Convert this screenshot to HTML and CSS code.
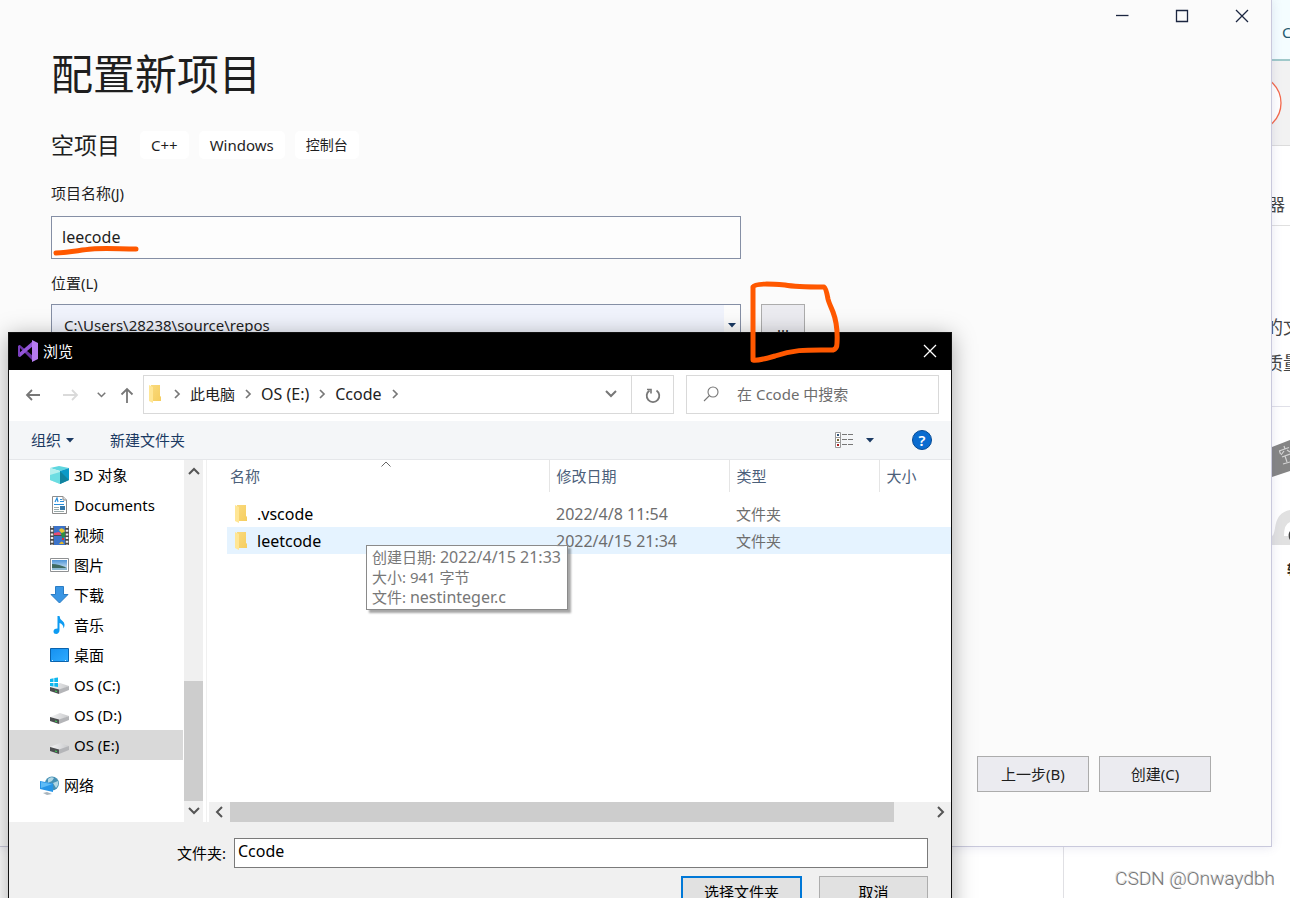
FILE: index.html
```html
<!DOCTYPE html>
<html lang="zh-CN">
<head>
<meta charset="utf-8">
<title>配置新项目</title>
<link rel="stylesheet" href="styles.css">
</head>
<body>
<svg class="defs" aria-hidden="true">
  <defs>
    <linearGradient id="g-folder" x1="0" x2="1" y2="1"><stop offset="0" stop-color="#ffe9a2"/><stop offset="1" stop-color="#f5cb58"/></linearGradient>
    <linearGradient id="g-drive" x1="0" x2="1"><stop offset="0" stop-color="#f4f4f5"/><stop offset="1" stop-color="#c9cacc"/></linearGradient>
    <linearGradient id="g-sky" x1="0" x2="0" y2="1"><stop offset="0" stop-color="#4d94d6"/><stop offset="1" stop-color="#e4f1f8"/></linearGradient>
    <linearGradient id="g-desk" x1="0" x2="1" y2="1"><stop offset="0" stop-color="#1590f0"/><stop offset="1" stop-color="#2fabff"/></linearGradient>
    <symbol id="folder" viewBox="0 0 13 18"><path d="M2 0h9v11l1 1v4H2z" fill="#f6cf63"/><path d="M2 0h9v11l1 1v4H2z" fill="url(#g-folder)" opacity=".4"/><path d="M0 0l4 2v16l-4-2z" fill="#ffe695"/></symbol>
    <symbol id="drive" viewBox="0 0 19 18"><path d="M0 11l10-4 9 3-9 4z" fill="url(#g-drive)"/><path d="M0 11l9 2.500V18L0 15z" fill="#4c4e50"/><path d="M9 13.500l10-3.500v4L9 18z" fill="#b4b5b8"/><path d="M5 14.500l2 .5v1l-2-.5z" fill="#3ddc55"/></symbol>
    <symbol id="crumb" viewBox="0 0 8 10"><path d="M2 1l4 4-4 4" fill="none" stroke="#777" stroke-width="1.700"/></symbol>
    <symbol id="caret" viewBox="0 0 8 5"><path d="M0 0h8L4 4.500z" fill="#1b3a63"/></symbol>
    <symbol id="chev-down" viewBox="0 0 12 8"><path d="M1 1l5 5 5-5" fill="none" stroke="currentColor" stroke-width="2"/></symbol>
  </defs>
</svg>

<div class="desktop">
  <aside class="browser">
    <div class="browser-tab">C</div>
    <div class="browser-tools"><svg width="30" height="62" viewBox="0 0 30 62"><circle cx="-7" cy="31" r="28" fill="#fff" stroke="#f4694c" stroke-width="1.300"/></svg></div>
    <div class="browser-menu">器</div>
    <div class="browser-text"><p>的文</p><p>质量</p></div>
    <div class="browser-user">
      <svg width="30" height="44" viewBox="0 0 30 44"><path d="M12 10L30 3v31l-18 6z" fill="#858585"/><g fill="none" stroke="#d4d4d4" stroke-width="1.200"><path d="M24 9l1 3M19 14l10-3.500M19.500 14l1 3M24 14l-3 4M27 13l3 2M22 20l8-3M25 19l2 6M23 27l7-2"/></g></svg>
      <svg width="30" height="40" viewBox="0 0 30 40"><path d="M12 38V29q2-1 3-8 2-16 15-18v12q-6 2-6 14h6v9z" fill="#e1e1e1"/><path d="M30 24q-3 4 0 9z" fill="#444"/></svg>
      <span>转</span>
    </div>
  </aside>
  <div class="browser-foot"></div>

  <main class="project">
    <header class="project-bar">
      <button aria-label="最小化"><svg width="14" height="14" viewBox="0 0 14 14"><path d="M1 6.500h12.500"/></svg></button>
      <button aria-label="最大化"><svg width="14" height="14" viewBox="0 0 14 14"><path d="M1.500 1.500h11v11h-11z"/></svg></button>
      <button aria-label="关闭"><svg width="14" height="14" viewBox="0 0 14 14"><path d="M1 1l12 12M13 1L1 13"/></svg></button>
    </header>
    <form class="project-form">
      <h1>配置新项目</h1>
      <div class="kind"><h2>空项目</h2><span class="tag tag-latin">C++</span><span class="tag tag-latin">Windows</span><span class="tag">控制台</span></div>
      <label class="lbl" for="pname">项目名称(J)</label>
      <input class="field" id="pname" value="leecode">
      <label class="lbl" for="ploc">位置(L)</label>
      <div class="loc">
        <div class="combo">
          <select id="ploc"><option>C:\Users\28238\source\repos</option></select>
          <span class="combo-arrow"><svg width="8" height="5"><use href="#caret"/></svg></span>
        </div>
        <button class="btn browse" type="button">...</button>
      </div>
      <footer class="project-actions"><button class="btn" type="button">上一步(B)</button><button class="btn" type="button">创建(C)</button></footer>
    </form>
  </main>

  <section class="dialog" aria-label="浏览">
    <header class="dialog-bar">
      <svg width="22" height="22" viewBox="0 0 22 22"><path d="M1 6l2-1 13 11v5L3 8v7l-2 1z" fill="#6a35a5"/><path d="M1 16l2 1L16 6V1L1 14z" fill="#9456d8"/><path d="M1 6l2-1v12l-2-1z" fill="#7a3fbd"/><path d="M15 0l6 3v16l-6 3z" fill="#b57bf0"/></svg>
      <span>浏览</span>
      <button aria-label="关闭"><svg width="14" height="14" viewBox="0 0 14 14"><path d="M1 1l12 12M13 1L1 13" stroke="#fff" stroke-width="1.300"/></svg></button>
    </header>

    <nav class="nav">
      <button class="nav-back" aria-label="后退"><svg width="16" height="14" viewBox="0 0 16 14"><path d="M15 7H2M7 2L2 7l5 5" fill="none" stroke="#777" stroke-width="1.800"/></svg></button>
      <button class="nav-fwd" aria-label="前进" disabled><svg width="16" height="14" viewBox="0 0 16 14"><path d="M0 7h14M9 2l5 5-5 5" fill="none" stroke="#dadada" stroke-width="1.800"/></svg></button>
      <button class="nav-recent" aria-label="最近"><svg width="9" height="6" viewBox="0 0 12 8"><use href="#chev-down"/></svg></button>
      <button class="nav-up" aria-label="上移"><svg width="14" height="16" viewBox="0 0 14 16"><path d="M7 16V2M1.500 7.500L7 2l5.500 5.500" fill="none" stroke="#777" stroke-width="1.800"/></svg></button>
      <div class="address">
        <svg width="13" height="18"><use href="#folder"/></svg>
        <svg class="crumb first" width="8" height="10"><use href="#crumb"/></svg>
        <a href="#pc">此电脑</a><svg class="crumb" width="8" height="10"><use href="#crumb"/></svg>
        <a class="latin" href="#e">OS (E:)</a><svg class="crumb" width="8" height="10"><use href="#crumb"/></svg>
        <a class="latin" href="#ccode">Ccode</a><svg class="crumb" width="8" height="10"><use href="#crumb"/></svg>
        <button class="history" aria-label="历史"><svg width="12" height="8"><use href="#chev-down"/></svg></button>
        <button class="refresh" aria-label="刷新"><svg width="18" height="18" viewBox="0 0 18 18" fill="none" stroke="#777" stroke-width="1.800"><path d="M12.500 4.500a6.300 6.300 0 1 1-7 0"/><path d="M3 3.500h4v4" stroke-width="1.600"/></svg></button>
      </div>
      <label class="search"><svg width="16" height="16" viewBox="0 0 16 16" fill="none" stroke="#777" stroke-width="1.100"><circle cx="10" cy="6" r="5"/><path d="M6.500 9.500L1 15"/></svg><input placeholder="在 Ccode 中搜索" aria-label="搜索"></label>
    </nav>

    <div class="tools">
      <button class="organize">组织<svg width="8" height="5"><use href="#caret"/></svg></button>
      <button>新建文件夹</button>
      <button class="views" aria-label="视图"><svg width="19" height="16" viewBox="0 0 19 16"><path d="M.5.5h5v15h-5zM.5 5.500h5M.5 10.500h5" fill="#fff" stroke="#999"/><path d="M2 2h2v2H2z" fill="#357"/><path d="M2 7h2v2H2z" fill="#763"/><path d="M2 12h2v2H2z" fill="#a22"/><path d="M7 2.500h5M13 2.500h5M7 7.500h5M13 7.500h5M7 12.500h5M13 12.500h5" stroke="#777"/></svg><svg width="8" height="5"><use href="#caret"/></svg></button>
      <button class="help" aria-label="帮助">?</button>
    </div>

    <div class="panes">
      <ul class="tree">
        <li><svg width="19" height="18" viewBox="0 0 19 18"><path d="M0 2l9-2 10 2-9 3z" fill="#5fd6df"/><path d="M0 2l10 3v13L0 14z" fill="#b5f0ee"/><path d="M0 9l10-3v12L0 14z" fill="#6cdde2"/><path d="M10 5l9-3v12l-9 4z" fill="#0c9ac8"/><path d="M10 5l9 9-9 4z" fill="#11839f"/></svg>3D 对象</li>
        <li><svg width="19" height="18" viewBox="0 0 19 18"><path d="M2.500.500H13l3.500 3.500v13.500h-14z" fill="#fff" stroke="#8d8d8d"/><path d="M13 .5V4h3.500" fill="#ddd" stroke="#8d8d8d"/><path d="M5 6l2-4 1 4M10 3.500h2M10 5.500h4M4 8.500h10" fill="none" stroke="#2a8fdb" stroke-width="1.200"/><path d="M4 11.500h5M4 13.500h5M4 15.500h10" stroke="#9aa"/><path d="M10 10h5v4h-5z" fill="#3679a9"/></svg>Documents</li>
        <li><svg width="19" height="19" viewBox="0 0 19 19"><path d="M0 0h19v19H0z" fill="#4b4b4d"/><path d="M2 0v19M17 0v19" stroke="#eee" stroke-width="2.500" stroke-dasharray="2 1.700"/><path d="M4 0h11v9H4zM4 10h11v9H4z" fill="#3c73c9"/><path d="M9 4q3-4 6 1l-3 3z" fill="#e9c52f"/><path d="M4 7l5-1 3 3H4z" fill="#eb4c73"/><path d="M11 7l4-1v5l-3 1z" fill="#2d8f43"/><path d="M9 18q3-5 5 0z" fill="#e4b72c"/><path d="M12 12h2v2h-2z" fill="#d6322c"/></svg>视频</li>
        <li><svg width="19" height="14" viewBox="0 0 19 14"><path d="M.5.5h18v13H.5z" fill="#fff" stroke="#8e9092"/><path d="M2 2h15v10H2z" fill="url(#g-sky)"/><path d="M2 6q7 0 15 4v1H2z" fill="#3f6b61"/><path d="M2 10h15v2H2z" fill="#8cb9d2"/></svg>图片</li>
        <li><svg width="19" height="18" viewBox="0 0 19 18"><path d="M5.500.5h8v8H18L9.500 17 1 8.500h4.500z" fill="#3a96e4" stroke="#2a7cc4"/></svg>下载</li>
        <li><svg width="19" height="18" viewBox="0 0 19 18"><path d="M7.500 0h2q0 3 3 5 3.500 3 1 7.500 0-4.500-4-5.500v7q0 3-3 4-3 0-3-2.500 0-3 4-3z" fill="#0d9bf2"/></svg>音乐</li>
        <li><svg width="19" height="14" viewBox="0 0 19 14"><path d="M.5.5h18v13H.5z" fill="url(#g-desk)" stroke="#0a63ad"/><path d="M2 12.500h15" stroke="#cfe9ff" stroke-dasharray="1 1 0 11"/></svg>桌面</li>
        <li><svg width="19" height="18" viewBox="0 0 19 18"><use href="#drive"/><path d="M0 3l3.500-.7V6H0zM4.300 2L8 1.500V6H4.300zM0 7h3.500v3.500L0 10zM4.300 7H8v4l-3.700-.4z" fill="#10b7ee"/></svg>OS (C:)</li>
        <li><svg width="19" height="18"><use href="#drive"/></svg>OS (D:)</li>
        <li class="selected"><svg width="19" height="18"><use href="#drive"/></svg>OS (E:)</li>
        <li class="root"><svg width="19" height="19" viewBox="0 0 19 19"><circle cx="12" cy="7.500" r="7" fill="#4690b4"/><path d="M8 3q3-3 6-1l-2 3-4 2zM13 7l5-2q1 4-2 7z" fill="#b2d7e4"/><path d="M0 5l13 3v9L0 14z" fill="#fff"/><path d="M0 5l13 2.500v8.500L0 13z" fill="#2795e6"/><path d="M1 6l11 2.300L1 12z" fill="#5fbcf6"/><path d="M3 17l4-1 5 2-5 1z" fill="#a9b4bc"/></svg>网络</li>
      </ul>
      <div class="vscroll"><svg width="12" height="8" viewBox="0 0 12 8"><path d="M1 7l5-5 5 5" fill="none" stroke="#555" stroke-width="2"/></svg><i></i><svg width="12" height="8"><use href="#chev-down"/></svg></div>
      <div class="files">
        <svg class="sort" width="10" height="6" viewBox="0 0 10 6"><path d="M.5 5.500L5 1l4.500 4.500" fill="none" stroke="#666"/></svg>
        <table>
          <colgroup><col class="c-name"><col class="c-date"><col class="c-type"><col></colgroup>
          <thead><tr><th>名称</th><th>修改日期</th><th>类型</th><th>大小</th></tr></thead>
          <tbody>
            <tr><td><span class="fname latin"><svg width="13" height="18"><use href="#folder"/></svg>.vscode</span></td><td class="latin">2022/4/8 11:54</td><td>文件夹</td><td></td></tr>
            <tr class="hover"><td><span class="fname latin"><svg width="13" height="18"><use href="#folder"/></svg>leetcode</span></td><td class="latin">2022/4/15 21:34</td><td>文件夹</td><td></td></tr>
          </tbody>
        </table>
        <div class="tip" role="tooltip"><div>创建日期: <span class="latin">2022/4/15 21:33</span></div><div>大小: 941 字节</div><div>文件: <span class="latin">nestinteger.c</span></div></div>
        <div class="hscroll"><svg width="8" height="12" viewBox="0 0 8 12"><path d="M7 1L2 6l5 5" fill="none" stroke="#555" stroke-width="2"/></svg><i></i><svg width="8" height="12" viewBox="0 0 8 12"><path d="M1 1l5 5-5 5" fill="none" stroke="#555" stroke-width="2"/></svg></div>
      </div>
    </div>

    <footer class="pick">
      <div class="pick-row"><label for="folder-name">文件夹:</label><input class="latin" id="folder-name" value="Ccode"></div>
      <div class="pick-actions"><button class="primary">选择文件夹</button><button>取消</button></div>
    </footer>
  </section>

  <svg class="marks" width="860" height="380" viewBox="0 0 860 380" aria-hidden="true"><path d="M56 253C72 252 80 250 92 249C105 248 120 249 136 249"/><path d="M753 287L753 360Q758 361 775 356C795 349 808 350 833 350Q837 349 837 343Q838 325 833 312C831 307 829 303 828 299Q826 288 824 287C810 287 795 287 785 285C772 284 755 283 753 287"/></svg>
  <div class="watermark">CSDN @Onwaydbh</div>
</div>
</body>
</html>
```
FILE: styles.css
```css
* { box-sizing: border-box; }

body {
  margin: 0;
  font: 15px/20px "Noto Sans", "Noto Sans CJK SC", sans-serif;
  color: #1e1e1e;
}

button, input, select { font: inherit; color: inherit; margin: 0; }
button { padding: 0; border: 0; background: none; }
svg { flex: none; display: block; }
h1, h2, p { margin: 0; font-weight: 400; }
a { color: inherit; text-decoration: none; }
.defs { position: absolute; width: 0; height: 0; }
.latin { font-size: 16px; }

.desktop {
  position: relative;
  height: 100vh;
  overflow: hidden;
  background: #fff;
}

/* Browser window behind the project window */
.browser { width: 30px; margin-left: auto; overflow: hidden; color: #444; }
.browser-tab { height: 61px; padding: 22px 0 0 22px; background: #f4fdff; border-bottom: 2px solid #a0c9ca; color: #245a70; }
.browser-tools { height: 85px; padding-top: 11px; background: #f2f2f2; border-bottom: 1px solid #dcdcdc; }
.browser-menu { height: 80px; padding: 49px 0 0 8px; font-size: 17px; border-bottom: 1px solid #e0e0e0; }
.browser-text { height: 181px; padding: 83px 0 0 5px; font-size: 18px; line-height: 36px; white-space: nowrap; border-bottom: 1px solid #e0e0e8; }
.browser-user { display: grid; gap: 26px; padding-top: 30px; }
.browser-user span { margin: -14px 0 0 27px; font-size: 13px; font-weight: 700; color: #222; }
.browser-foot { position: absolute; left: 0; right: 226px; bottom: 0; height: 51px; border-right: 1px solid #e0e0e4; }

/* Project window */
.project {
  position: absolute;
  inset: 0 18px 51px 0;
  display: flex;
  flex-direction: column;
  background: #fbfbfb;
  border: solid #c9c9dc;
  border-width: 0 1px 1px 0;
  box-shadow: 0 0 10px rgba(80, 80, 150, .15);
}
.project-bar { display: flex; justify-content: flex-end; }
.project-bar button { width: 60px; height: 32px; padding-left: 2px; display: grid; place-items: center; }
.project-bar path { fill: none; stroke: #1b2640; stroke-width: 1.300; }
.project-form { flex: 1; display: flex; flex-direction: column; padding: 14px 60px 54px 51px; }
h1 { font-size: 42px; line-height: 56px; }
.kind { display: flex; align-items: center; gap: 10px; margin: 29px 0 24px; }
h2 { font-size: 23px; line-height: 28px; margin-right: 10px; }
.tag { padding: 4px 11px; background: #fff; border-radius: 5px; font-size: 14px; }
.tag-latin { font-size: 15px; }
.field { width: 690px; max-width: 100%; height: 43px; margin: 13px 0 14px; padding: 0 10px 2px; background: #fdfdfd; border: 1px solid #858fa5; font-size: 16px; }
.loc { display: flex; gap: 20px; margin-top: 11px; }
.combo { display: flex; width: 690px; height: 43px; border: 1px solid #858fa5; background: #f0f3fc; }
.combo select { flex: 1; appearance: none; padding: 0 12px 2px; border: 0; background: none; }
.combo-arrow { width: 16px; display: grid; place-items: center; background: #fcfcfc; }
.btn { width: 112px; height: 36px; border: 1px solid #acacac; background: #ebebf0; }
.browse { width: 44px; height: 43px; }
.project-actions { display: flex; justify-content: flex-end; gap: 10px; margin-top: auto; }

/* Folder dialog */
.dialog {
  position: absolute;
  inset: 332px 338px auto 8px;
  background: #fff;
  border: 1px solid #111;
  box-shadow: 0 4px 22px rgba(0, 0, 0, .34);
  color: #000;
}
.dialog-bar { display: flex; align-items: center; gap: 4px; height: 37px; padding: 0 0 2px 8px; background: #000; color: #fff; }
.dialog-bar button { margin-left: auto; width: 42px; height: 35px; display: grid; place-items: center; }

.nav { display: flex; align-items: center; height: 51px; padding: 0 12px 2px 16px; color: #777; }
.nav-fwd { margin-left: 22px; }
.nav-recent { margin-left: 18px; }
.nav-up { margin: 0 9px 0 14px; }
.address { flex: 1; display: flex; align-items: center; height: 39px; padding: 0 0 2px 5px; border: 1px solid #d9d9d9; }
.address a { color: #222; }
.crumb { margin: 0 9px; }
.crumb.first { margin-left: 11px; }
.history { margin-left: auto; width: 41px; height: 37px; display: grid; place-items: center; }
.refresh { width: 42px; height: 37px; margin-bottom: -2px; display: grid; place-items: center; border-left: 1px solid #d9d9d9; }
.search { display: flex; align-items: center; gap: 18px; width: 253px; height: 39px; margin-left: 12px; padding: 0 0 2px 16px; border: 1px solid #d9d9d9; }
.search input { flex: 1; min-width: 0; padding: 0; border: 0; }
.search input::placeholder { color: #6d6d6d; opacity: 1; }

.tools { display: flex; align-items: center; height: 39px; padding: 0 19px 0 22px; background: #f4f6f8; border-bottom: 1px solid #e5e7ea; color: #1b3a63; }
.organize, .views { display: flex; align-items: center; }
.organize { gap: 5px; margin-right: 36px; }
.views { gap: 12px; margin: 0 38px 0 auto; }
.help { width: 20px; height: 20px; border-radius: 50%; border: 1px solid #064a94; background: #0a6cd0; color: #fff; line-height: 18px; font-weight: 600; }

.panes { display: flex; height: 362px; }
.tree { list-style: none; margin: 0; padding: 0 1px 0 0; width: 175px; }
.tree li { display: flex; align-items: center; gap: 5px; height: 30px; padding-left: 41px; }
.tree .selected { background: #d9d9d9; }
.tree .root { margin-top: 10px; padding-left: 31px; }
.vscroll { display: flex; flex-direction: column; align-items: center; width: 19px; padding: 7px 0; background: #f0f0f0; color: #555; }
.vscroll i { width: 19px; height: 120px; margin: auto 0 6px; background: #cdcdcd; }

.files { position: relative; flex: 1; display: flex; flex-direction: column; margin-left: 3px; border-left: 1px solid #f0f0f0; }
.files table { table-layout: fixed; border-collapse: collapse; width: calc(100% - 20px); margin-left: 20px; color: #6d6d6d; }
.c-name { width: 322px; }
.c-date { width: 180px; }
.c-type { width: 150px; }
th { height: 32px; padding: 0 7px; border-right: 1px solid #e5e5e5; text-align: left; font-weight: 400; color: #4c607a; }
th:first-child { padding-left: 3px; }
th:last-child { border: 0; }
tbody::before { content: ""; display: block; height: 8px; }
td { height: 27px; padding: 0 7px; }
.fname { display: flex; align-items: center; gap: 9px; padding-left: 1px; color: #000; }
.hover { background: #e5f3ff; }
.sort { position: absolute; left: 174px; top: 1px; }
.tip { position: absolute; left: 159px; top: 85px; padding: 1px 6px 2px 5px; border: 1px solid #8a8a8a; background: rgba(255, 255, 255, .88); box-shadow: 3px 3px 2px rgba(0, 0, 0, .35); color: #777; white-space: nowrap; }
.tip div { height: 20px; }
.hscroll { display: flex; align-items: center; height: 20px; margin: auto 0 0 2px; padding: 0 6px; background: #f0f0f0; }
.hscroll i { flex: 1; height: 20px; margin: 0 43px 0 7px; background: #cdcdcd; }

.pick { padding: 16px 23px; background: #f0f0f0; }
.pick-row { display: flex; align-items: center; gap: 8px; margin-left: -23px; }
.pick-row label { width: 217px; text-align: right; }
.pick-row input { flex: 1; height: 30px; padding: 0 3px 4px; border: 1px solid #7a7a7a; background: #fff; }
.pick-actions { display: flex; justify-content: flex-end; gap: 17px; margin-top: 8px; }
.pick-actions button { width: 109px; height: 32px; border: 1px solid #adadad; background: #e1e1e1; }
.pick-actions .primary { width: 121px; border: 2px solid #0078d7; }

/* Hand-drawn marks and watermark */
.marks { position: absolute; left: 0; top: 0; pointer-events: none; }
.marks path { fill: none; stroke: #ff5800; stroke-width: 5; stroke-linecap: round; stroke-linejoin: round; }
.watermark { position: absolute; right: 15px; bottom: 7px; font: 300 19px/24px Roboto, sans-serif; color: #777; text-shadow: -1px -1px 0 #ddd; }
```
